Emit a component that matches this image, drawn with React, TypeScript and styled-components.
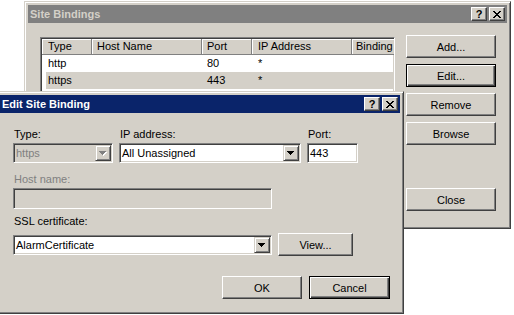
import React from "react";
import styled, { createGlobalStyle } from "styled-components";

const FACE = "#d4d0c8";

const GlobalStyle = createGlobalStyle`
  html, body { margin: 0; padding: 0; background: #fff; }
  body {
    font-family: "Liberation Sans", Arial, sans-serif;
    font-size: 11px;
    color: #000;
  }
  * { box-sizing: border-box; }
`;

const Desktop = styled.div`
  position: relative;
  width: 514px;
  height: 315px;
  overflow: hidden;
  background: #fff;
`;

const Win = styled.section<{ $x: number; $y: number; $w: number; $h: number }>`
  position: absolute;
  left: ${(p) => p.$x}px;
  top: ${(p) => p.$y}px;
  width: ${(p) => p.$w}px;
  height: ${(p) => p.$h}px;
  display: flex;
  flex-direction: column;
  background: ${FACE};
  border: 1px solid;
  border-color: ${FACE} #404040 #404040 ${FACE};
  box-shadow: inset 1px 1px #fff, inset -1px -1px #808080;
  padding: 3px;
`;

const TitleBar = styled.div<{ $active: boolean }>`
  flex: none;
  height: 18px;
  display: flex;
  align-items: center;
  padding: 0 2px;
  background: ${(p) => (p.$active ? "#0a246a" : "#808080")};
  color: ${(p) => (p.$active ? "#fff" : FACE)};
  font-weight: bold;
  font-size: 11px;
`;

const TitleText = styled.span`
  flex: 1;
  white-space: nowrap;
`;

const CaptionButtons = styled.div`
  display: flex;
  gap: 2px;
`;

const CaptionButton = styled.div`
  width: 16px;
  height: 14px;
  background: ${FACE};
  border: 1px solid;
  border-color: #fff #404040 #404040 #fff;
  box-shadow: inset -1px -1px #808080;
  display: flex;
  align-items: center;
  justify-content: center;
  color: #000;
  font-weight: bold;
  font-size: 11px;
  line-height: 12px;
`;

const SitesClient = styled.div`
  flex: 1;
  display: flex;
  align-items: flex-start;
  gap: 11px;
  padding: 12px 0 0 12px;
`;

const ListView = styled.div`
  width: 355px;
  height: 180px;
  margin-top: 2px;
  background: #fff;
  border: 1px solid;
  border-color: #808080 #fff #fff #808080;
  box-shadow: inset 1px 1px #404040, inset -1px -1px ${FACE};
  padding: 1px;
  overflow: hidden;
`;

const ListHeader = styled.div`
  display: flex;
  height: 16px;
  background: ${FACE};
`;

const HeaderCell = styled.div<{ $w: number; $pad: number }>`
  flex: none;
  width: ${(p) => p.$w}px;
  padding-left: ${(p) => p.$pad}px;
  border-right: 1px solid #808080;
  border-bottom: 1px solid #808080;
  box-shadow: inset 1px 1px #fff;
  line-height: 15px;
  white-space: nowrap;
  overflow: hidden;
`;

const ListRow = styled.div<{ $selected?: boolean }>`
  display: flex;
  height: 17px;
  margin-left: 4px;
  background: ${(p) => (p.$selected ? FACE : "#fff")};
`;

const RowCell = styled.div<{ $w: number; $pad: number }>`
  flex: none;
  width: ${(p) => p.$w}px;
  padding-left: ${(p) => p.$pad}px;
  line-height: 17px;
  white-space: nowrap;
  overflow: hidden;
`;

const ButtonColumn = styled.div`
  display: flex;
  flex-direction: column;
  gap: 6px;
`;

const PushButton = styled.button<{ $w: number; $default?: boolean; $mt?: number }>`
  width: ${(p) => p.$w}px;
  height: 23px;
  margin: ${(p) => p.$mt ?? 0}px 0 0 0;
  padding: 0;
  flex: none;
  font-family: "Liberation Sans", Arial, sans-serif;
  font-size: 11px;
  color: #000;
  background: ${FACE};
  border: 1px solid;
  border-color: ${(p) => (p.$default ? "#000" : "#fff #404040 #404040 #fff")};
  box-shadow: ${(p) =>
    p.$default
      ? "inset 1px 1px #fff, inset -1px -1px #404040, inset -2px -2px #808080"
      : "inset -1px -1px #808080"};
  display: flex;
  align-items: center;
  justify-content: center;
`;

const DialogClient = styled.div`
  flex: 1;
  display: flex;
  flex-direction: column;
  padding: 15px 0 0 13px;
`;

const FieldRow = styled.div<{ $mt?: number; $gap?: number }>`
  display: flex;
  align-items: flex-start;
  gap: ${(p) => p.$gap ?? 6}px;
  margin-top: ${(p) => p.$mt ?? 0}px;
`;

const FieldGroup = styled.div`
  display: flex;
  flex-direction: column;
`;

const Label = styled.div<{ $disabled?: boolean; $mb?: number }>`
  line-height: 13px;
  padding-left: 1px;
  margin-bottom: ${(p) => p.$mb ?? 2}px;
  color: ${(p) => (p.$disabled ? "#808080" : "#000")};
  white-space: nowrap;
`;

const Field = styled.div<{ $w: number; $h?: number; $disabled?: boolean; $mt?: number }>`
  width: ${(p) => p.$w}px;
  height: ${(p) => p.$h ?? 20}px;
  margin-top: ${(p) => p.$mt ?? 0}px;
  display: flex;
  background: ${(p) => (p.$disabled ? FACE : "#fff")};
  border: 1px solid;
  border-color: #808080 #fff #fff #808080;
  box-shadow: inset 1px 1px #404040, inset -1px -1px ${FACE};
  padding: 1px;
`;

const FieldText = styled.div<{ $disabled?: boolean }>`
  flex: 1;
  display: flex;
  align-items: center;
  padding-left: 1px;
  color: ${(p) => (p.$disabled ? "#808080" : "#000")};
  white-space: nowrap;
  overflow: hidden;
`;

const DropButton = styled.div`
  flex: none;
  width: 16px;
  background: ${FACE};
  border: 1px solid;
  border-color: ${FACE} #404040 #404040 ${FACE};
  box-shadow: inset 1px 1px #fff, inset -1px -1px #808080;
  display: flex;
  align-items: center;
  justify-content: center;
`;

const DialogFooter = styled.div`
  display: flex;
  justify-content: flex-end;
  gap: 7px;
  margin-top: 20px;
  padding-right: 10px;
`;

const CloseGlyph = () => (
  <svg width="8" height="7" viewBox="0 0 8 7" shapeRendering="crispEdges">
    <g fill="#000">
      <rect x="0" y="0" width="2" height="1" />
      <rect x="6" y="0" width="2" height="1" />
      <rect x="1" y="1" width="2" height="1" />
      <rect x="5" y="1" width="2" height="1" />
      <rect x="2" y="2" width="4" height="1" />
      <rect x="3" y="3" width="2" height="1" />
      <rect x="2" y="4" width="4" height="1" />
      <rect x="1" y="5" width="2" height="1" />
      <rect x="5" y="5" width="2" height="1" />
      <rect x="0" y="6" width="2" height="1" />
      <rect x="6" y="6" width="2" height="1" />
    </g>
  </svg>
);

const Arrow = ({ disabled }: { disabled?: boolean }) => (
  <svg width="8" height="5" viewBox="0 0 8 5" shapeRendering="crispEdges">
    {disabled && (
      <g fill="#fff" transform="translate(1,1)">
        <rect x="0" y="0" width="7" height="1" />
        <rect x="1" y="1" width="5" height="1" />
        <rect x="2" y="2" width="3" height="1" />
        <rect x="3" y="3" width="1" height="1" />
      </g>
    )}
    <g fill={disabled ? "#808080" : "#000"}>
      <rect x="0" y="0" width="7" height="1" />
      <rect x="1" y="1" width="5" height="1" />
      <rect x="2" y="2" width="3" height="1" />
      <rect x="3" y="3" width="1" height="1" />
    </g>
  </svg>
);

const Caption = ({ title, active }: { title: string; active: boolean }) => (
  <TitleBar $active={active}>
    <TitleText>{title}</TitleText>
    <CaptionButtons>
      <CaptionButton>?</CaptionButton>
      <CaptionButton>
        <CloseGlyph />
      </CaptionButton>
    </CaptionButtons>
  </TitleBar>
);

const Combo = ({
  w,
  text,
  disabled,
  mt,
}: {
  w: number;
  text: string;
  disabled?: boolean;
  mt?: number;
}) => (
  <Field $w={w} $disabled={disabled} $mt={mt}>
    <FieldText $disabled={disabled}>{text}</FieldText>
    <DropButton>
      <Arrow disabled={disabled} />
    </DropButton>
  </Field>
);

const columns = [
  { title: "Type", hw: 50, hp: 6, rw: 46, rp: 2 },
  { title: "Host Name", hw: 110, hp: 5, rw: 110, rp: 5 },
  { title: "Port", hw: 50, hp: 5, rw: 50, rp: 5 },
  { title: "IP Address", hw: 100, hp: 6, rw: 100, rp: 6 },
  { title: "Binding", hw: 100, hp: 4, rw: 100, rp: 4 },
];

const rows = [
  { cells: ["http", "", "80", "*", ""], selected: false },
  { cells: ["https", "", "443", "*", ""], selected: true },
];

export default function App() {
  return (
    <>
      <GlobalStyle />
      <Desktop>
        <Win $x={24} $y={1} $w={487} $h={228}>
          <Caption title="Site Bindings" active={false} />
          <SitesClient>
            <ListView>
              <ListHeader>
                {columns.map((c) => (
                  <HeaderCell key={c.title} $w={c.hw} $pad={c.hp}>
                    {c.title}
                  </HeaderCell>
                ))}
              </ListHeader>
              {rows.map((r, i) => (
                <ListRow key={i} $selected={r.selected}>
                  {r.cells.map((v, j) => (
                    <RowCell key={j} $w={columns[j].rw} $pad={columns[j].rp}>
                      {v}
                    </RowCell>
                  ))}
                </ListRow>
              ))}
            </ListView>
            <ButtonColumn>
              <PushButton $w={90}>Add...</PushButton>
              <PushButton $w={90} $default>
                Edit...
              </PushButton>
              <PushButton $w={90}>Remove</PushButton>
              <PushButton $w={90}>Browse</PushButton>
              <PushButton $w={90} $mt={37}>
                Close
              </PushButton>
            </ButtonColumn>
          </SitesClient>
        </Win>

        <Win $x={-4} $y={91} $w={408} $h={223}>
          <Caption title="Edit Site Binding" active />
          <DialogClient>
            <FieldRow>
              <FieldGroup>
                <Label>Type:</Label>
                <Combo w={100} text="https" disabled />
              </FieldGroup>
              <FieldGroup>
                <Label>IP address:</Label>
                <Combo w={182} text="All Unassigned" />
              </FieldGroup>
              <FieldGroup>
                <Label>Port:</Label>
                <Field $w={51}>
                  <FieldText>443</FieldText>
                </Field>
              </FieldGroup>
            </FieldRow>
            <FieldRow $mt={10}>
              <FieldGroup>
                <Label $disabled>Host name:</Label>
                <Field $w={259} $h={21} $disabled />
              </FieldGroup>
            </FieldRow>
            <FieldRow $mt={6}>
              <FieldGroup>
                <Label $mb={5}>SSL certificate:</Label>
                <FieldRow>
                  <Combo w={259} text="AlarmCertificate" mt={2} />
                  <PushButton $w={75}>View...</PushButton>
                </FieldRow>
              </FieldGroup>
            </FieldRow>
            <DialogFooter>
              <PushButton $w={80}>OK</PushButton>
              <PushButton $w={81} $default>
                Cancel
              </PushButton>
            </DialogFooter>
          </DialogClient>
        </Win>
      </Desktop>
    </>
  );
}
